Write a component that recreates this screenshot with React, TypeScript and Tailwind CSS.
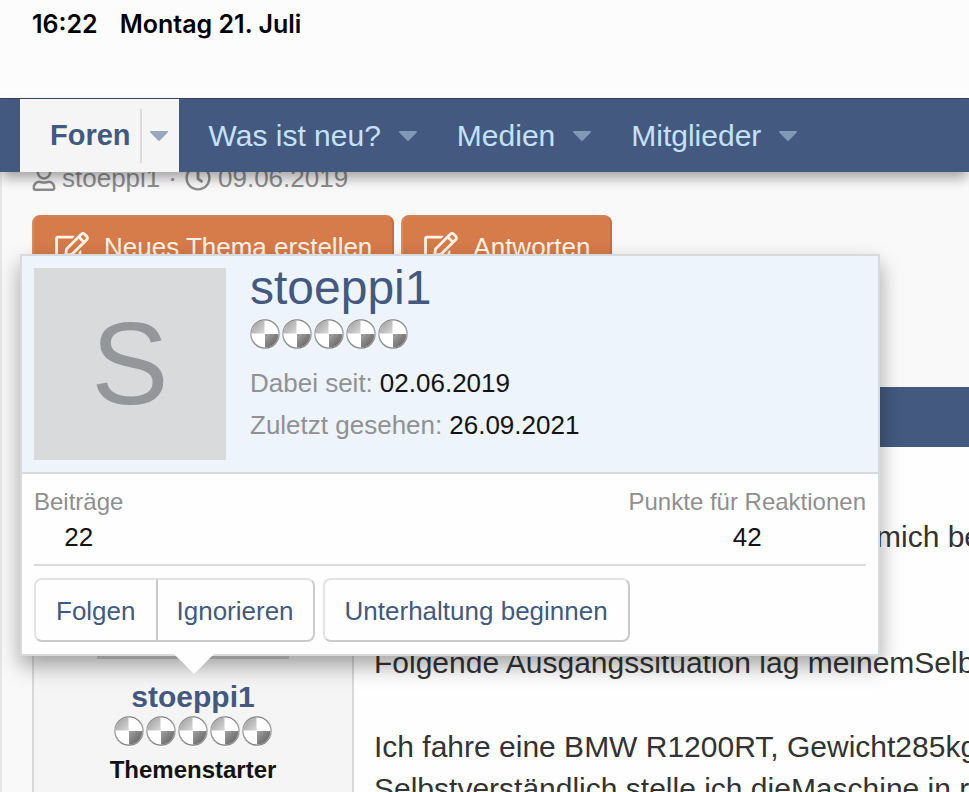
import type { ReactNode } from "react";
import { FaRegClock, FaRegEdit, FaRegUser } from "react-icons/fa";

const navItems = ["Was ist neu?", "Medien", "Mitglieder"];

function Caret({ className }: { className: string }) {
    return (
        <svg viewBox="0 0 18 10" className={`h-[10px] w-[18px] ${className}`} aria-hidden="true">
            <path d="M1 0h16c.9 0 1.3 .9 .7 1.5L9.900 9.500c-.5 .5-1.300 .5-1.800 0L.3 1.500C-.3 .9 .1 0 1 0z" fill="currentColor" />
        </svg>
    );
}

function Roundel() {
    return (
        <svg viewBox="0 0 30 30" className="size-[30px]" aria-hidden="true">
            <circle cx="15" cy="15" r="14.8" fill="url(#rim)" />
            <circle cx="15" cy="15" r="13.4" fill="#fff" />
            <path d="M14.500 14.500V1.600A13.400 13.400 0 0 0 1.600 14.500z" fill="url(#light)" />
            <path d="M15 15V28.400A13.400 13.400 0 0 0 28.400 15z" fill="url(#dark)" />
        </svg>
    );
}

function Rank() {
    return (
        <div className="flex gap-0.5">
            {[...Array(5)].map((_, i) => (
                <Roundel key={i} />
            ))}
        </div>
    );
}

function ActionButton({ children }: { children: ReactNode }) {
    return (
        <button
            type="button"
            className="flex h-16 items-center gap-[14px] rounded-lg border-2 border-t-[#cf8259] border-r-[#cb6c3a] border-b-[#cb6c3a] border-l-[#dc8a60] bg-[#d67b4a] px-5 text-[26px] whitespace-nowrap text-[#fff4e8]"
        >
            <FaRegEdit className="h-[30px] w-9" />
            {children}
        </button>
    );
}

function MemberCard() {
    return (
        <section
            aria-label="stoeppi1"
            className="absolute top-[82px] left-[18px] z-10 w-[860px] border-2 border-[#d8dadc] bg-[#fefefe] shadow-[0_10px_20px_rgba(0,0,0,0.35)]"
        >
            <div className="flex gap-6 border-b-2 border-[#d8dadc] bg-[#edf4fb] p-3">
                <div className="flex size-48 items-center justify-center bg-[#d9dadb] text-[116px] leading-none text-[#949799]">S</div>
                <div>
                    <h4 className="text-[48px] leading-10">
                        <a href="#stoeppi1" className="text-[#43597f]">stoeppi1</a>
                    </h4>
                    <div className="mt-[11px] mb-[13px]">
                        <Rank />
                    </div>
                    <dl className="text-[26px] leading-[42px] text-[#131313]">
                        <div className="flex gap-[7px]">
                            <dt className="text-[#8f9193]">Dabei seit:</dt>
                            <dd>02.06.2019</dd>
                        </div>
                        <div className="flex gap-[7px]">
                            <dt className="text-[#8f9193]">Zuletzt gesehen:</dt>
                            <dd>26.09.2021</dd>
                        </div>
                    </dl>
                </div>
            </div>

            <div className="p-3">
                <dl className="flex justify-between border-b-2 border-[#d8dadc] pb-2 text-center text-[#131313]">
                    <div>
                        <dt className="text-2xl text-[#8f8f8f]">Beiträge</dt>
                        <dd className="text-[26px] leading-[38px]">22</dd>
                    </div>
                    <div>
                        <dt className="text-2xl text-[#8f8f8f]">Punkte für Reaktionen</dt>
                        <dd className="text-[26px] leading-[38px]">42</dd>
                    </div>
                </dl>
                <div className="mt-3 flex gap-2 text-[26px] text-[#43597f]">
                    <div className="flex">
                        <button type="button" className="h-16 rounded-l-lg border-2 border-t-[#e3e3e3] border-r-[#cbcbcb] border-b-[#cbcbcb] border-l-[#e3e3e3] px-5 pt-0.5">Folgen</button>
                        <button type="button" className="h-16 rounded-r-lg border-2 border-l-0 border-t-[#e3e3e3] border-r-[#cbcbcb] border-b-[#cbcbcb] px-[19px] pt-0.5">Ignorieren</button>
                    </div>
                    <button type="button" className="h-16 rounded-lg border-2 border-t-[#e3e3e3] border-r-[#cbcbcb] border-b-[#cbcbcb] border-l-[#e3e3e3] px-5 pt-0.5">Unterhaltung beginnen</button>
                </div>
            </div>

            {/* Pointer towards the user name */}
            <svg viewBox="0 0 40 20" className="absolute top-full left-[152px] h-5 w-10" aria-hidden="true">
                <path d="M0 0h40L20 20z" fill="#fefefe" />
            </svg>
        </section>
    );
}

export default function App() {
    return (
        <div className="flex h-screen flex-col overflow-hidden bg-[#f9f9f9] font-['Liberation_Sans',Arial,sans-serif]">
            {/* Shared gradients for the rank roundels */}
            <svg className="absolute size-0" aria-hidden="true">
                <defs>
                    <linearGradient id="rim" x1="0" y1="0" x2="0" y2="1">
                        <stop offset="0" stopColor="#808080" />
                        <stop offset=".5" stopColor="#aaa" />
                        <stop offset="1" stopColor="#808080" />
                    </linearGradient>
                    <linearGradient id="light" x1="0" y1="0" x2="1" y2="1">
                        <stop offset="0" stopColor="#999" />
                        <stop offset="1" stopColor="#dadada" />
                    </linearGradient>
                    <linearGradient id="dark" x1="0" y1="0" x2="1" y2="1">
                        <stop offset="0" stopColor="#a5a5a5" />
                        <stop offset="1" stopColor="#555" />
                    </linearGradient>
                </defs>
            </svg>

            <div className="flex h-[98px] shrink-0 gap-[22px] bg-[#fcfcfc] px-8 pt-2 font-[Inter,sans-serif] text-[25px] leading-8 font-semibold text-black">
                <span>16:22</span>
                <span>Montag 21. Juli</span>
            </div>

            <nav className="relative z-20 flex h-[74px] shrink-0 border-t border-[#33435f] bg-[#43597f] pl-5 text-[30px] whitespace-nowrap text-[#c3e2fa] shadow-[0_8px_12px_-2px_rgba(0,0,0,0.35)]">
                <div className="flex items-center bg-[#f5f5f5] pl-[30px] text-[#43597f]">
                    <a href="#foren" className="pr-[9px] text-[29px] font-bold">Foren</a>
                    <button type="button" aria-label="Foren Menü" className="flex h-[54px] items-center border-l-2 border-[#d8dadc] pr-[11px] pl-2">
                        <Caret className="text-[#9aa7bb]" />
                    </button>
                </div>
                <div className="flex items-center gap-10 pl-[30px]">
                    {navItems.map((item) => (
                        <div key={item} className="flex items-center gap-[18px]">
                            <a href="#nav">{item}</a>
                            <button type="button" aria-label={`${item} Menü`}>
                                <Caret className="text-[#8199b8]" />
                            </button>
                        </div>
                    ))}
                </div>
            </nav>

            <main className="relative min-h-0 flex-1 border-l-2 border-[#e6e6e6]">
                <MemberCard />

                <div className="h-full overflow-hidden pl-[30px]">
                    <div className="-mt-[13px] flex h-[38px] items-center text-[26px] text-[#8c8c8c]">
                        <FaRegUser className="mr-1.5 h-[26px] w-6" />
                        <span>stoeppi1</span>
                        <span className="px-2">·</span>
                        <FaRegClock className="mr-[7px] size-[26px]" />
                        <time>09.06.2019</time>
                    </div>

                    <div className="mt-[18px] flex gap-[7px]">
                        <ActionButton>Neues Thema erstellen</ActionButton>
                        <ActionButton>Antworten</ActionButton>
                    </div>

                    <div className="mt-[108px] h-[60px] bg-[#43597f]" />

                    <article className="flex h-[400px] border-l-2 border-[#d8d8d8] bg-[#fefefe]">
                        <div className="flex w-80 shrink-0 flex-col items-center border-r-2 border-[#d8d8d8] bg-[#f5f5f5] pt-5">
                            <div className="size-48 bg-[#d0d0d0]" />
                            <a href="#stoeppi1" className="mt-5 text-[30px] leading-9 font-bold text-[#43597f]">stoeppi1</a>
                            <div className="mt-px">
                                <Rank />
                            </div>
                            <div className="mt-2 text-2xl font-bold text-[#131313]">Themenstarter</div>
                        </div>
                        <div className="min-w-0 flex-1 overflow-hidden pt-[69px] pl-5 text-[30px] leading-[42px] whitespace-nowrap text-[#333]">
                            <p className="pl-[502px]">mich be</p>
                            <p className="mt-[84px]">Folgende Ausgangssituation lag meinemSelb</p>
                            <p className="mt-[42px]">Ich fahre eine BMW R1200RT, Gewicht285kg</p>
                            <p>Selbstverständlich stelle ich dieMaschine in r</p>
                        </div>
                    </article>
                </div>
            </main>
        </div>
    );
}
